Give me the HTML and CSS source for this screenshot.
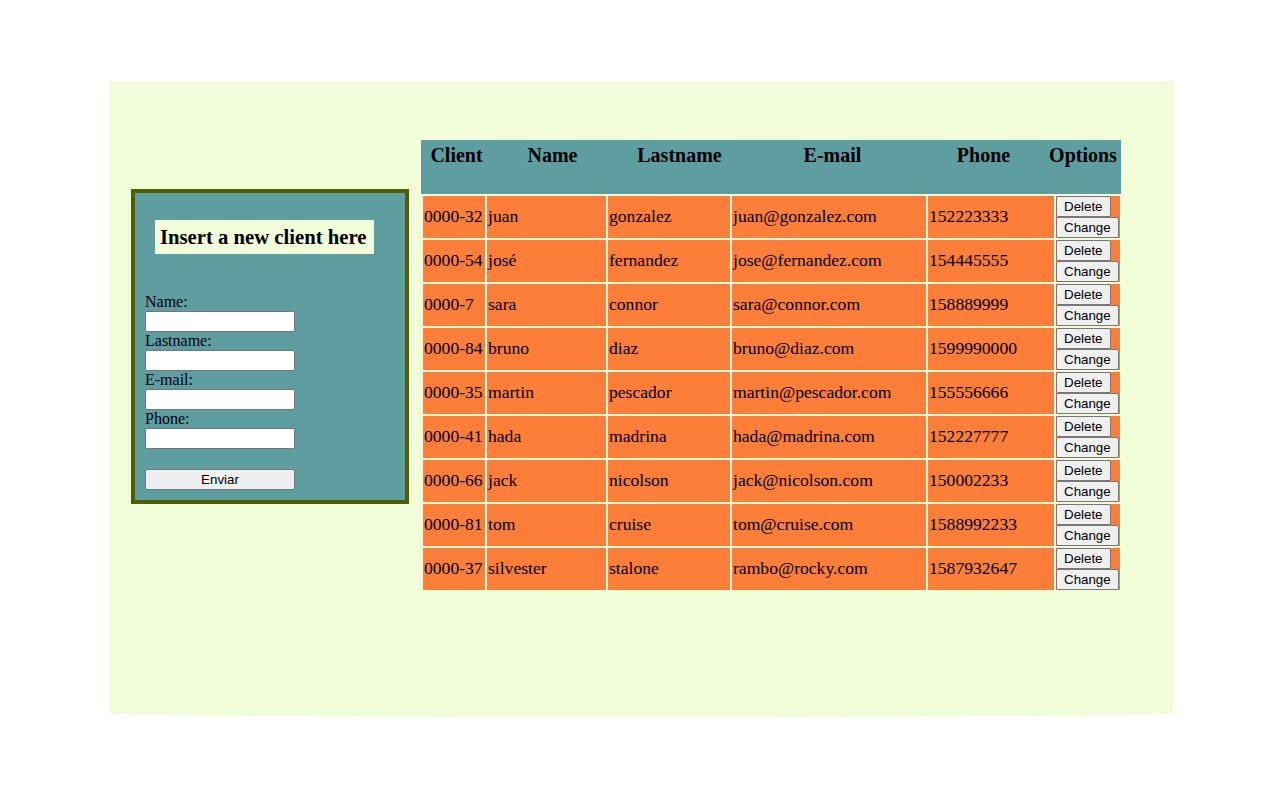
FILE: index.html
```html
<!DOCTYPE html>
<html>
<head>
<meta charset="utf-8">
<title>Clients</title>
<link rel="stylesheet" href="styles.css">
</head>
<body>
<div class="page">
  <div class="form-box">
    <h2 class="form-title">Insert a new client here</h2>
    <form class="client-form">
      <label>Name:</label>
      <input type="text" class="field">
      <label>Lastname:</label>
      <input type="text" class="field">
      <label>E-mail:</label>
      <input type="text" class="field">
      <label>Phone:</label>
      <input type="text" class="field">
      <button type="button" class="send">Enviar</button>
    </form>
  </div>
  <div class="table-wrap">
    <div class="table-head">
      <div>Client</div>
      <div>Name</div>
      <div>Lastname</div>
      <div>E-mail</div>
      <div>Phone</div>
      <div>Options</div>
    </div>
    <table class="clients">
      <colgroup>
        <col class="c1"><col class="c2"><col class="c3"><col class="c4"><col class="c5"><col class="c6">
      </colgroup>
      <tbody>
        <tr><td>0000-32</td><td>juan</td><td>gonzalez</td><td>juan@gonzalez.com</td><td>152223333</td><td class="opts"><button>Delete</button><button>Change</button></td></tr>
        <tr><td>0000-54</td><td>josé</td><td>fernandez</td><td>jose@fernandez.com</td><td>154445555</td><td class="opts"><button>Delete</button><button>Change</button></td></tr>
        <tr><td>0000-7</td><td>sara</td><td>connor</td><td>sara@connor.com</td><td>158889999</td><td class="opts"><button>Delete</button><button>Change</button></td></tr>
        <tr><td>0000-84</td><td>bruno</td><td>diaz</td><td>bruno@diaz.com</td><td>1599990000</td><td class="opts"><button>Delete</button><button>Change</button></td></tr>
        <tr><td>0000-35</td><td>martin</td><td>pescador</td><td>martin@pescador.com</td><td>155556666</td><td class="opts"><button>Delete</button><button>Change</button></td></tr>
        <tr><td>0000-41</td><td>hada</td><td>madrina</td><td>hada@madrina.com</td><td>152227777</td><td class="opts"><button>Delete</button><button>Change</button></td></tr>
        <tr><td>0000-66</td><td>jack</td><td>nicolson</td><td>jack@nicolson.com</td><td>150002233</td><td class="opts"><button>Delete</button><button>Change</button></td></tr>
        <tr><td>0000-81</td><td>tom</td><td>cruise</td><td>tom@cruise.com</td><td>1588992233</td><td class="opts"><button>Delete</button><button>Change</button></td></tr>
        <tr><td>0000-37</td><td>silvester</td><td>stalone</td><td>rambo@rocky.com</td><td>1587932647</td><td class="opts"><button>Delete</button><button>Change</button></td></tr>
      </tbody>
    </table>
  </div>
</div>
</body>
</html>
```
FILE: styles.css
```css
html, body {
  margin: 0;
  padding: 0;
  background: #ffffff;
}
body {
  padding: 81px 0 0 109px;
  font-family: "Liberation Serif", "Times New Roman", serif;
  color: #000;
}
.page {
  box-sizing: border-box;
  width: 1064px;
  height: 636px;
  background: #f1fdd9;
  border-radius: 0 0 50% 50% / 0 0 4px 4px;
  display: flex;
  align-items: flex-start;
  padding: 59px 0 0 22px;
  gap: 12px;
}
.form-box {
  box-sizing: border-box;
  width: 278px;
  margin-top: 49px;
  border: 4px solid #4e5e00;
  background: #5f9ea0;
  padding: 27px 10px 10px 10px;
}
.form-title {
  display: inline-block;
  margin: 0 0 39px 10px;
  padding: 5px 8px 5px 5px;
  background: #f1fdd9;
  font-size: 20.7px;
  font-weight: bold;
  line-height: 24px;
}
.client-form {
  display: flex;
  flex-direction: column;
  align-items: flex-start;
}
.client-form label {
  font-size: 16px;
  line-height: 18px;
  height: 18px;
}
.field {
  box-sizing: border-box;
  width: 150px;
  height: 21px;
  margin: 0;
  border: 1px solid #767676;
  border-radius: 2px;
  background: #fff;
  padding: 1px 2px;
}
.send {
  box-sizing: border-box;
  width: 150px;
  height: 21px;
  margin-top: 20px;
  font-family: "Liberation Sans", Arial, sans-serif;
  font-size: 13.33px;
  background: #efefef;
  border: 1px solid #767676;
  border-radius: 2px;
  padding: 0;
}
.table-wrap {
  width: 700px;
}
.table-head {
  display: grid;
  grid-template-columns: 71px 121px 133px 173px 129px 70px 3px;
  height: 54px;
  box-sizing: border-box;
  padding-top: 4px;
  background: #5f9ea0;
  font-size: 20px;
  font-weight: bold;
  line-height: 23px;
  text-align: center;
}
.clients {
  table-layout: fixed;
  border-collapse: separate;
  border-spacing: 2px;
  width: 701px;
}
.c1 { width: 62px; }
.c2 { width: 119px; }
.c3 { width: 122px; }
.c4 { width: 194px; }
.c5 { width: 126px; }
.c6 { width: 64px; }
.clients td {
  background: #fc7e39;
  height: 42px;
  padding: 0 1px 1px 1px;
  font-size: 17.6px;
  vertical-align: middle;
  white-space: nowrap;
  box-sizing: border-box;
}
.clients td.opts {
  white-space: normal;
  padding: 0;
  line-height: 0;
}
.opts button {
  box-sizing: border-box;
  height: 21px;
  margin: 0;
  padding: 0 7px;
  font-family: "Liberation Sans", Arial, sans-serif;
  font-size: 13.33px;
  line-height: 15px;
  background: #efefef;
  border: 1px solid #767676;
  border-radius: 2px;
  color: #000;
  vertical-align: top;
}
```
